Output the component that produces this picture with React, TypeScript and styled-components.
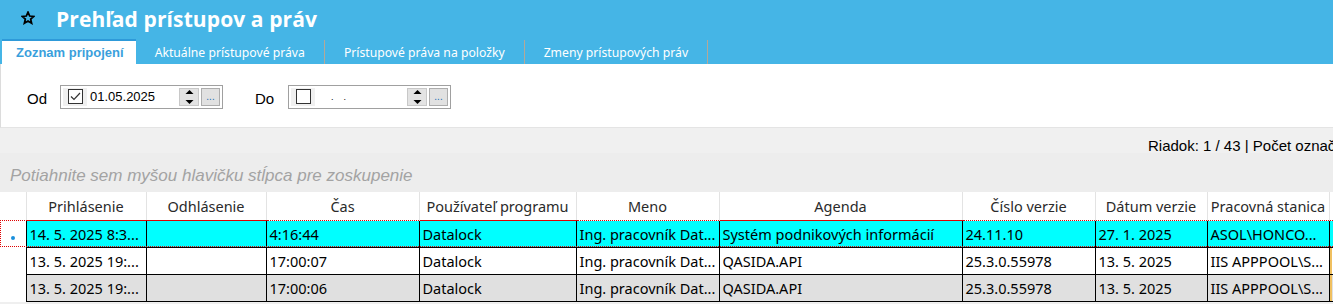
import React from 'react';
import styled, { createGlobalStyle } from 'styled-components';

const GlobalStyle = createGlobalStyle`
  html, body {
    margin: 0;
    padding: 0;
    background: #efefef;
    overflow: hidden;
  }
  * {
    box-sizing: border-box;
  }
`;

const tabs = [
  'Zoznam pripojení',
  'Aktuálne prístupové práva',
  'Prístupové práva na položky',
  'Zmeny prístupových práv',
];

const columns = [
  { title: 'Prihlásenie', width: 120 },
  { title: 'Odhlásenie', width: 120 },
  { title: 'Čas', width: 153 },
  { title: 'Používateľ programu', width: 157 },
  { title: 'Meno', width: 143 },
  { title: 'Agenda', width: 243 },
  { title: 'Číslo verzie', width: 133 },
  { title: 'Dátum verzie', width: 112 },
  { title: 'Pracovná stanica', width: 122 },
  { title: '', width: 120 },
];

type RowKind = 'focused' | 'plain' | 'alt';

const rows: { kind: RowKind; cells: string[] }[] = [
  {
    kind: 'focused',
    cells: ['14. 5. 2025 8:3...', '', '4:16:44', 'Datalock', 'Ing. pracovník Dat...', 'Systém podnikových informácií', '24.11.10', '27. 1. 2025', 'ASOL\\HONCO...', ''],
  },
  {
    kind: 'plain',
    cells: ['13. 5. 2025 19:...', '', '17:00:07', 'Datalock', 'Ing. pracovník Dat...', 'QASIDA.API', '25.3.0.55978', '13. 5. 2025', 'IIS  APPPOOL\\S...', ''],
  },
  {
    kind: 'alt',
    cells: ['13. 5. 2025 19:...', '', '17:00:06', 'Datalock', 'Ing. pracovník Dat...', 'QASIDA.API', '25.3.0.55978', '13. 5. 2025', 'IIS  APPPOOL\\S...', ''],
  },
];

const StarIcon = () => (
  <svg width="14" height="14" viewBox="0 0 24 24">
    <polygon
      points="12,2 14.9,8.6 22,9.3 16.6,14 18.2,21 12,17.3 5.8,21 7.4,14 2,9.3 9.1,8.6"
      fill="none"
      stroke="#000"
      strokeWidth="3"
      strokeLinejoin="miter"
    />
  </svg>
);

const SpinArrows = () => (
  <svg width="9" height="16" viewBox="0 0 9 16">
    <polygon points="0.5,5 4.5,1 8.5,5" fill="#000" />
    <polygon points="0.5,11 4.5,15 8.5,11" fill="#000" />
  </svg>
);

const DateField: React.FC<{ value?: string; checked?: boolean }> = ({ value, checked }) => (
  <DateBox>
    <CheckArea>
      <CheckSquare>
        {checked && (
          <svg width="13" height="13" viewBox="0 0 13 13">
            <polyline points="2,6.5 5,9.5 11,3" fill="none" stroke="#333" strokeWidth="1.2" />
          </svg>
        )}
      </CheckSquare>
    </CheckArea>
    <DateText $empty={!value}>{value || '.    .'}</DateText>
    <Spinner>
      <SpinArrows />
    </Spinner>
    <DotsButton>...</DotsButton>
  </DateBox>
);

export default function App() {
  return (
    <>
      <GlobalStyle />
      <Page>
        <Header>
          <TitleRow>
            <StarWrap>
              <StarIcon />
            </StarWrap>
            <Title>Prehľad prístupov a práv</Title>
          </TitleRow>
          <TabStrip>
            {tabs.map((t, i) => (
              <Tab key={t} $active={i === 0}>
                {t}
              </Tab>
            ))}
          </TabStrip>
        </Header>

        <FilterPanel>
          <FilterLabel>Od</FilterLabel>
          <DateField value="01.05.2025" checked />
          <FilterLabel $gap>Do</FilterLabel>
          <DateField />
        </FilterPanel>

        <StatusBar>
          <StatusText>Riadok: 1 / 43 | Počet označ</StatusText>
        </StatusBar>

        <GroupPanel>Potiahnite sem myšou hlavičku stĺpca pre zoskupenie</GroupPanel>

        <Grid>
          <colgroup>
            <col style={{ width: 26 }} />
            {columns.map((c, i) => (
              <col key={i} style={{ width: c.width }} />
            ))}
          </colgroup>
          <thead>
            <tr>
              <IndicatorHead />
              {columns.map((c, i) => (
                <HeadCell key={i}>{c.title}</HeadCell>
              ))}
            </tr>
          </thead>
          <tbody>
            {rows.map((r, ri) => (
              <DataRow key={ri} $kind={r.kind}>
                <Indicator>{r.kind === 'focused' && <Dot />}</Indicator>
                {r.cells.map((c, ci) => (
                  <Cell key={ci} $kind={r.kind} $mark={ci === r.cells.length - 1 && r.kind !== 'focused'}>
                    {c}
                  </Cell>
                ))}
              </DataRow>
            ))}
          </tbody>
        </Grid>
      </Page>
    </>
  );
}

const Page = styled.div`
  width: 1333px;
  height: 304px;
  overflow: hidden;
  display: flex;
  flex-direction: column;
  background: #efefef;
`;

const Header = styled.div`
  background: #45b5e6;
  display: flex;
  flex-direction: column;
`;

const TitleRow = styled.div`
  height: 39px;
  display: flex;
  align-items: center;
  padding-left: 21px;
`;

const StarWrap = styled.div`
  width: 14px;
  height: 14px;
  display: flex;
  margin-top: -3px;
  margin-right: 21px;
`;

const Title = styled.h1`
  margin: 0;
  margin-top: -2px;
  font-family: 'Open Sans', 'Noto Sans', sans-serif;
  font-weight: 700;
  font-size: 21px;
  color: #fff;
  letter-spacing: 0.1px;
`;

const TabStrip = styled.div`
  height: 25px;
  display: flex;
  align-items: stretch;
  padding-left: 2px;
`;

const Tab = styled.div<{ $active?: boolean }>`
  display: flex;
  align-items: center;
  white-space: nowrap;
  ${(p) =>
    p.$active
      ? `
    background: #fff;
    color: #3a9fdc;
    font-family: 'Liberation Sans', Arial, sans-serif;
    font-weight: 700;
    font-size: 13px;
    border-top: 2px solid #2e9ad9;
    padding: 0 12px 0 14px;
  `
      : `
    color: #fff;
    font-family: 'Noto Sans', 'Open Sans', sans-serif;
    font-size: 12.2px;
    padding: 1px 19px 0 19px;
    margin-top: 1px;
    border-right: 1px solid #b4a898;
  `}
`;

const FilterPanel = styled.div`
  height: 64px;
  background: #fff;
  border-left: 1px solid #dcdcdc;
  border-bottom: 1px solid #e4e4e4;
  display: flex;
  align-items: center;
  padding-left: 26px;
  padding-top: 2px;
`;

const FilterLabel = styled.span<{ $gap?: boolean }>`
  font-family: 'Liberation Sans', Arial, sans-serif;
  font-size: 15px;
  color: #000;
  margin-top: 3px;
  margin-left: ${(p) => (p.$gap ? '32px' : '0')};
  width: 33px;
`;

const DateBox = styled.div`
  width: 163px;
  height: 24px;
  border: 1px solid #a0a0a0;
  display: flex;
  align-items: center;
  padding: 2px;
  background: #fff;
`;

const CheckArea = styled.div`
  width: 24px;
  height: 100%;
  background: #f0f0f0;
  display: flex;
  align-items: center;
  justify-content: center;
`;

const CheckSquare = styled.div`
  width: 15px;
  height: 15px;
  border: 1px solid #333;
  background: #fff;
  display: flex;
  align-items: center;
  justify-content: center;
`;

const DateText = styled.span<{ $empty?: boolean }>`
  flex: 1;
  font-family: 'Liberation Sans', Arial, sans-serif;
  color: #000;
  padding-left: ${(p) => (p.$empty ? '16px' : '3px')};
  white-space: pre;
  font-size: ${(p) => (p.$empty ? '9px' : '13px')};
`;

const Spinner = styled.div`
  width: 20px;
  height: 18px;
  background: #e3e3e3;
  border: 1px solid #c8c8c8;
  display: flex;
  align-items: center;
  justify-content: center;
  margin-right: 2px;
`;

const DotsButton = styled.div`
  width: 19px;
  height: 18px;
  background: #e1e1e1;
  border: 1px solid #adadad;
  color: #1e70b5;
  font-family: 'Liberation Sans', Arial, sans-serif;
  font-size: 10px;
  display: flex;
  align-items: flex-end;
  justify-content: center;
  padding-bottom: 3px;
`;

const StatusBar = styled.div`
  height: 25px;
  background: #f0f0f0;
  display: flex;
  justify-content: flex-end;
  align-items: center;
`;

const StatusText = styled.div`
  width: 185px;
  white-space: nowrap;
  font-family: 'Liberation Sans', Arial, sans-serif;
  font-size: 15px;
  color: #000;
  margin-top: 9px;
`;

const GroupPanel = styled.div`
  height: 39px;
  background: #ededed;
  display: flex;
  align-items: center;
  padding-left: 10px;
  padding-top: 6px;
  font-family: 'Liberation Sans', Arial, sans-serif;
  font-style: italic;
  font-size: 17px;
  color: #a3a3a3;
  white-space: nowrap;
`;

const Grid = styled.table`
  table-layout: fixed;
  border-collapse: collapse;
  width: 1449px;
  font-family: 'Noto Sans', 'Open Sans', sans-serif;
  font-size: 14.5px;
  color: #000;
  background: #fff;
`;

const IndicatorHead = styled.th`
  height: 28px;
  background: #fff;
  border-right: 1px solid #e3e3e3;
`;

const HeadCell = styled.th`
  height: 28px;
  font-weight: 400;
  color: #2a2a2a;
  text-align: center;
  border-right: 1px solid #e3e3e3;
  background: #fff;
  white-space: nowrap;
  overflow: hidden;
  padding: 0 3px;
`;

const rowBg: Record<RowKind, string> = {
  focused: '#00ffff',
  plain: '#ffffff',
  alt: '#e0e0e0',
};

const DataRow = styled.tr<{ $kind: RowKind }>`
  height: 27px;
  ${(p) => (p.$kind === 'focused' ? 'outline: 1px dotted #e00000; outline-offset: -1px;' : '')}
`;

const Indicator = styled.td`
  background: #fff;
  border: none;
  text-align: center;
  vertical-align: middle;
  padding: 0;
`;

const Dot = styled.span`
  display: inline-block;
  width: 4px;
  height: 4px;
  border-radius: 50%;
  background: #1a8fdc;
`;

const Cell = styled.td<{ $kind: RowKind; $mark?: boolean }>`
  background: ${(p) => rowBg[p.$kind]};
  border: 1px solid #000;
  border-top: ${(p) => (p.$kind === 'focused' ? '1px dotted #e00000' : '1px solid #000')};
  border-bottom: ${(p) => (p.$kind === 'focused' ? '1px dotted #e00000' : '1px solid #000')};
  padding: 0 3px;
  white-space: nowrap;
  overflow: hidden;
  vertical-align: middle;
  ${(p) => (p.$mark ? 'box-shadow: inset 2px 0 0 0 #f0c060;' : '')}
`;
